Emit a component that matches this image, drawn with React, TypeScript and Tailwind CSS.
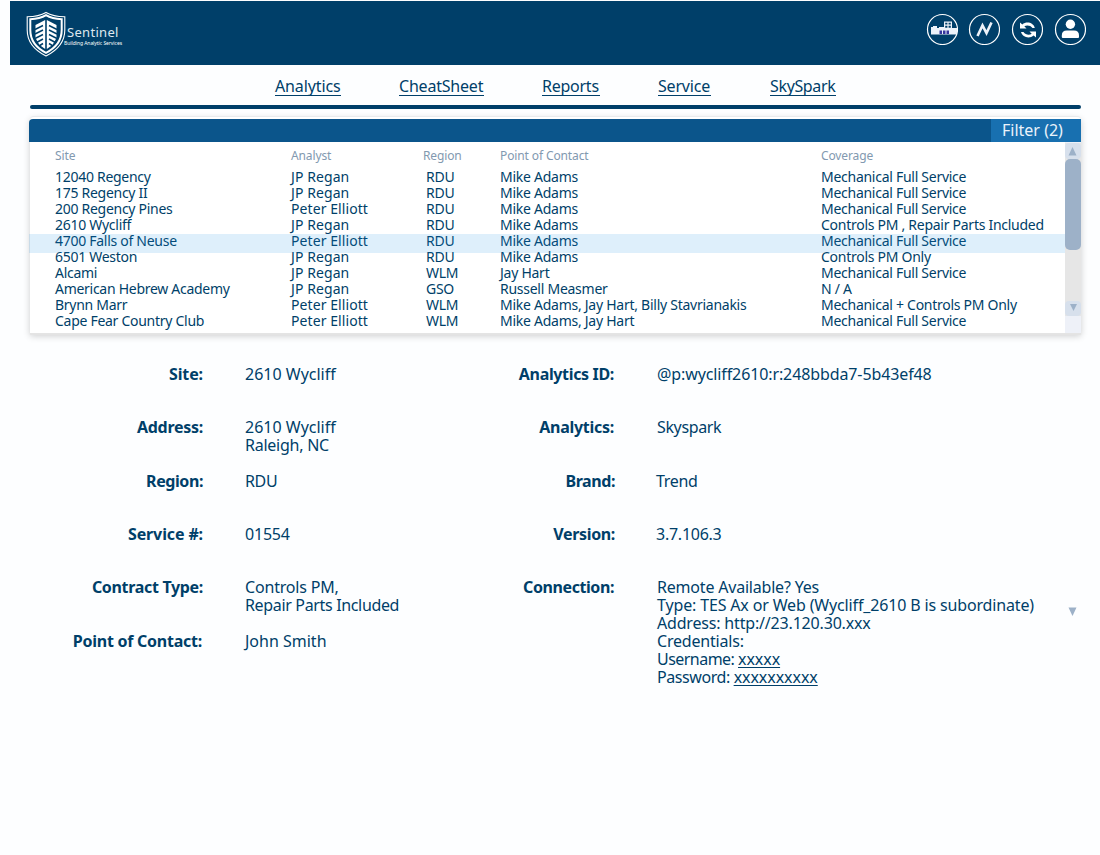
import type { ReactNode } from "react";

const navLinks = [
  { label: "Analytics", box: "ml-[275px] w-[66px]", text: "tracking-[-0.12px]" },
  { label: "CheatSheet", box: "ml-[58px] w-[85px]", text: "tracking-[-0.20px]" },
  { label: "Reports", box: "ml-[58px] w-[58px]", text: "tracking-[-0.25px]" },
  { label: "Service", box: "ml-[58px] w-[53px]", text: "tracking-[-0.20px]" },
  { label: "SkySpark", box: "ml-[59px] w-[66px]", text: "tracking-[-0.35px]" },
];

const columnTracking = [
  "tracking-[-0.28px]",
  "tracking-[0.08px]",
  "tracking-[-0.26px]",
  "tracking-[-0.26px]",
  "tracking-[-0.27px]",
];

const sites = [
  ["12040 Regency", "JP Regan", "RDU", "Mike Adams", "Mechanical Full Service"],
  ["175 Regency II", "JP Regan", "RDU", "Mike Adams", "Mechanical Full Service"],
  ["200 Regency Pines", "Peter Elliott", "RDU", "Mike Adams", "Mechanical Full Service"],
  ["2610 Wycliff", "JP Regan", "RDU", "Mike Adams", "Controls PM , Repair Parts Included"],
  ["4700 Falls of Neuse", "Peter Elliott", "RDU", "Mike Adams", "Mechanical Full Service"],
  ["6501 Weston", "JP Regan", "RDU", "Mike Adams", "Controls PM Only"],
  ["Alcami", "JP Regan", "WLM", "Jay Hart", "Mechanical Full Service"],
  ["American Hebrew Academy", "JP Regan", "GSO", "Russell Measmer", "N / A"],
  ["Brynn Marr", "Peter Elliott", "WLM", "Mike Adams, Jay Hart, Billy Stavrianakis", "Mechanical + Controls PM Only"],
  ["Cape Fear Country Club", "Peter Elliott", "WLM", "Mike Adams, Jay Hart", "Mechanical Full Service"],
];

function RoundButton({ label, className, children }: { label: string; className: string; children: ReactNode }) {
  return (
    <button aria-label={label} className={`h-8 w-8 ${className}`}>
      <svg viewBox="0 0 32 32" className="h-8 w-8" fill="none">
        <circle cx="16.5" cy="16.5" r="15" stroke="#fff" strokeWidth="1.2" />
        {children}
      </svg>
    </button>
  );
}

function Shield() {
  return (
    <svg viewBox="0 0 40 46" className="h-[46px] w-10" fill="none">
      <path d="M20 1.5 Q13 5.6 1.2 5.8 V19 C1.2 32 9 39.5 20 45 C31 39.5 38.8 32 38.8 19 V5.8 Q27 5.6 20 1.5Z" stroke="#fff" strokeWidth="1.1" />
      <path d="M20 4.2 Q14 7.8 4.3 8.2 V19 C4.3 30 10.5 37 20 41.8 C29.5 37 35.7 30 35.7 19 V8.2 Q26 7.8 20 4.2Z" stroke="#fff" strokeWidth="2" />
      <path d="M9.5 14 L19.2 9 V38 L13.5 34 L9.5 27Z" fill="#fff" />
      <path d="M20.8 9 L30.5 14 V27 L26.500 34 L20.8 38Z" fill="#fff" />
      <path d="M9 18.500 L17 14.500 M9 23 L17 19 M9 27.500 L17 23.500 M10.500 31.500 L17 28 M13 35 L17 32.500" stroke="#003f69" strokeWidth="1.5" />
      <path d="M23 14.500 L31 18.500 M23 19 L31 23 M23 23.500 L31 27.500 M23 28 L29.500 31.500 M23 32.500 L27 35" stroke="#003f69" strokeWidth="1.5" />
    </svg>
  );
}

function Arrow({ up }: { up?: boolean }) {
  return (
    <svg viewBox="0 0 9 9" className="h-[9px] w-[9px]">
      <path d={up ? "M0.500 8.500 L4.500 0 L8.500 8.500Z" : "M0.500 0.500 H8.500 L4.500 9Z"} fill="#9db1c8" />
    </svg>
  );
}

function Field({ label, size, fit = "tracking-[-0.35px]", children }: { label: string; size: string; fit?: string; children: ReactNode }) {
  return (
    <div className={`flex gap-[42px] ${size}`}>
      <dt className={`w-[175px] shrink-0 text-right font-bold whitespace-nowrap ${fit}`}>{label}</dt>
      <dd className="tracking-[-0.34px] whitespace-nowrap">{children}</dd>
    </div>
  );
}

export default function App() {
  return (
    <div className="h-[855px] w-[1100px] overflow-hidden bg-[#fdfeff] pt-px font-['Noto_Sans',sans-serif] text-[#003f69]">
      <header className="ml-[10px] flex h-16 items-start bg-[#003f69] pl-4 text-white">
        <div className="pt-[10px]">
          <Shield />
        </div>
        <div className="w-[70px] pt-[23px] pl-[1px]">
          <div className="text-[13px] leading-[16px] tracking-[0.300px] text-[#dfe8ef]">Sentinel</div>
          <div className="-ml-[3px] text-[5px] leading-[6px] tracking-[-0.060px] whitespace-nowrap">Building Analytic Services</div>
        </div>
        <div className="flex pt-3 pl-[790px]">
          <RoundButton label="Buildings" className="">
            <path d="M5 14 H7 V13 H11 V15 H13 V14 H18 V8.500 H26 V15 H31 V21.500 H5Z" fill="#edf2f9" />
            <path d="M19.200 9.700 H21.400 V11.600 H19.200Z M22.600 9.700 H24.800 V11.600 H22.600Z M19.200 12.800 H21.400 V14.700 H19.200Z M22.600 12.800 H24.800 V14.700 H22.600Z" fill="#003f69" />
            <path d="M13.500 17.500 H16 V21 H13.500Z M17 17.500 H19.500 V21 H17Z M20.500 17.500 H23 V21 H20.500Z" fill="#35359e" />
          </RoundButton>
          <RoundButton label="Trends" className="ml-[10px]">
            <path d="M9.500 23 L14.500 12.500 L18.500 20 L23.500 9.500" stroke="#edf2f9" strokeWidth="2.600" />
          </RoundButton>
          <RoundButton label="Refresh" className="ml-[11px]">
            <path d="M9 9.500 V15.500 H15.500 L13.300 13.300 C15.500 11.800 19.500 12 21.500 15 L23.800 15 C22.500 9.500 15.500 8 11.300 11.500Z" fill="#fff" />
            <path d="M25 24.500 V18.500 H18.500 L20.700 20.700 C18.500 22.500 14.500 22 12.500 19 L10 19 C11.500 24.500 18.500 26 22.700 22.500Z" fill="#fff" />
          </RoundButton>
          <RoundButton label="Account" className="ml-[11px]">
            <circle cx="16.400" cy="11.300" r="4.700" fill="#fff" />
            <path d="M7.800 24 V22.500 Q7.800 17.500 12.800 17.500 H20 Q25 17.500 25 22.500 V24 Q25 25 24 25 H8.800 Q7.800 25 7.800 24Z" fill="#fff" />
          </RoundButton>
        </div>
      </header>

      <nav className="flex h-10 pt-[11px] text-[16px] leading-[21px]">
        {navLinks.map((n) => (
          <a key={n.label} href="#" className={`h-[20px] border-b border-[#003f69] whitespace-nowrap ${n.box} ${n.text}`}>
            {n.label}
          </a>
        ))}
      </nav>
      <div className="ml-[30px] h-1 w-[1051px] rounded-sm bg-[#003f69]" />

      <section className="mt-[7px] ml-[30px] h-[217px] w-[1051px] rounded-t border-t border-[#e9ebed] bg-white pt-[2px] shadow-[0_2px_1px_#e4e4e4,0_3px_7px_rgba(0,0,0,0.2)]">
        <div className="-ml-px flex h-[23px] w-[1052px] justify-end rounded-tl bg-[#0b558b]">
          <div className="w-[90px] bg-[#1870b0] pl-[11px] text-[16px] leading-[23px] tracking-[0px] whitespace-nowrap text-[#eaf3fb]">Filter (2)</div>
        </div>
        <div className="flex h-[191px]">
          <div className="relative w-[1035px] pt-[5px]">
            <div className="grid h-[22px] grid-cols-[236px_132px_77px_321px_1fr] pl-[25px] text-[12px] leading-[18px] tracking-[-0.120px] text-[#8299b0]">
              <span>Site</span>
              <span>Analyst</span>
              <span>Region</span>
              <span>Point of Contact</span>
              <span>Coverage</span>
            </div>
            {sites.map((row) => (
              <div key={row[0]} className="grid h-4 grid-cols-[236px_135px_74px_321px_1fr] pl-[25px] text-[14px] leading-[16px] whitespace-nowrap">
                {row.map((cell, i) => (
                  <span key={i} className={columnTracking[i]}>{cell}</span>
                ))}
              </div>
            ))}
            <div className="absolute top-[92px] -left-px h-[19px] w-[1036px] bg-[#2491e6]/15" />
          </div>
          <div className="w-4 bg-[#eef1f8] pt-px">
            <div className="flex h-[173px] flex-col bg-[#e6e6e6]">
              <div className="flex h-4 items-center justify-center rounded bg-[#d7e0ec] pr-px">
                <Arrow up />
              </div>
              <div className="h-[91px] rounded-[5px] bg-[#9db1c8]" />
              <div className="mt-auto flex h-[15px] items-center justify-center rounded bg-[#d7e0ec] pb-[2px]">
                <svg viewBox="0 0 7 7" className="h-[7px] w-[7px]">
                  <path d="M0 0 H7 L3.500 7Z" fill="#9db1c8" />
                </svg>
              </div>
            </div>
          </div>
        </div>
      </section>

      <main className="flex pt-8 pl-7 text-[16px] leading-[18px]">
        <dl className="w-[412px]">
          <Field label="Site:" size="h-[53px]" fit="tracking-[-0.12px]"><span className="tracking-[0px]">2610 Wycliff</span></Field>
          <Field label="Address:" size="h-[54px]" fit="tracking-[-0.28px]">
            <span className="tracking-[0px]">2610 Wycliff</span><br />
            <span className="tracking-[-0.25px]">Raleigh, NC</span>
          </Field>
          <Field label="Region:" size="h-[53px]" fit="tracking-[-0.42px]">RDU</Field>
          <Field label="Service #:" size="h-[53px]" fit="tracking-[-0.12px]"><span className="tracking-[-0.20px]">01554</span></Field>
          <Field label="Contract Type:" size="h-[54px]" fit="tracking-[-0.32px]">
            <span className="tracking-[-0.18px]">Controls PM,</span><br />
            Repair Parts Included
          </Field>
          <Field label="Point of Contact:" size="h-[53px]" fit="-ml-px mr-px tracking-[-0.25px]"><span className="tracking-[0px]">John Smith</span></Field>
        </dl>
        <dl className="w-[628px]">
          <Field label="Analytics ID:" size="h-[53px]" fit="-ml-px mr-px tracking-[-0.34px]"><span className="tracking-[-0.11px]">@p:wycliff2610:r:248bbda7-5b43ef48</span></Field>
          <Field label="Analytics:" size="h-[54px]" fit="-ml-px mr-px tracking-[-0.28px]"><span className="tracking-[-0.37px]">Skyspark</span></Field>
          <Field label="Brand:" size="h-[53px]" fit="tracking-[-0.42px]"><span className="-ml-px">Trend</span></Field>
          <Field label="Version:" size="h-[53px]"><span className="-ml-px tracking-[-0.25px]">3.7.106.3</span></Field>
          <Field label="Connection:" size="h-[108px]" fit="-ml-px mr-px tracking-[-0.42px]">
            <span className="tracking-[-0.20px]">Remote Available? Yes</span><br />
            <span className="tracking-[-0.15px]">Type: TES Ax or Web (Wycliff_2610 B is subordinate)</span><br />
            <span className="tracking-[-0.18px]">Address: http://23.120.30.xxx</span><br />
            <span className="tracking-[-0.20px]">Credentials:</span><br />
            <span className="tracking-[-0.53px]">Username: </span><a href="#" className="tracking-[-0.05px] underline underline-offset-2">xxxxx</a><br />
            <span className="tracking-[-0.42px]">Password: </span><a href="#" className="tracking-[-0.05px] underline underline-offset-2">xxxxxxxxxx</a>
          </Field>
        </dl>
        <div className="pt-[242px]">
          <Arrow />
        </div>
      </main>
    </div>
  );
}
